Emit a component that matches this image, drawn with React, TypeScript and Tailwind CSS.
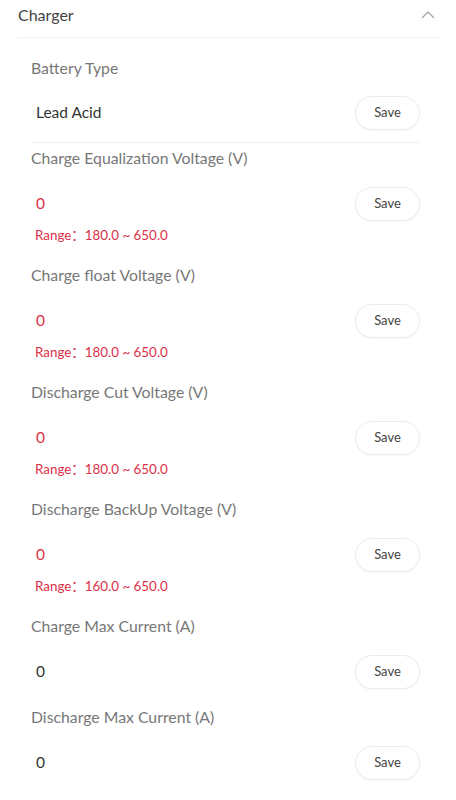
import React from 'react';

type Field = {
  label: string;
  value: string;
  range?: string;
};

const fields: Field[] = [
  { label: 'Charge Equalization Voltage (V)', value: '0', range: '180.0 ~ 650.0' },
  { label: 'Charge float Voltage (V)', value: '0', range: '180.0 ~ 650.0' },
  { label: 'Discharge Cut Voltage (V)', value: '0', range: '180.0 ~ 650.0' },
  { label: 'Discharge BackUp Voltage (V)', value: '0', range: '160.0 ~ 650.0' },
  { label: 'Charge Max Current (A)', value: '0' },
  { label: 'Discharge Max Current (A)', value: '0' },
];

const SaveButton = () => (
  <button className="w-[65px] h-[34px] rounded-full border border-[#ececec] bg-white text-[13px] text-[#444] shadow-[0_1px_2px_rgba(0,0,0,0.04)]">
    Save
  </button>
);

const App = () => {
  return (
    <div
      className="w-[456px] min-h-[800px] bg-white pl-[18px] pr-[16px]"
      style={{ fontFamily: 'Lato, "Noto Sans CJK SC", sans-serif' }}
    >
      {/* header */}
      <div className="h-[38px] flex items-center justify-between pb-[8px] border-b border-[#f3f3f3]">
        <span className="text-[16px] text-[#444]">Charger</span>
        <svg width="14" height="9" viewBox="0 0 14 9" className="mr-[5px]">
          <path d="M1 8 L7 2 L13 8" fill="none" stroke="#aaa" strokeWidth="1.4" />
        </svg>
      </div>

      <div className="pl-[13px] pr-[20px]">
        {/* battery type */}
        <div className="border-b border-[#f0f0f0] pb-[12px] mt-[19px]">
          <div className="text-[15.8px] leading-[22px] text-[#777]">Battery Type</div>
          <div className="mt-[17px] flex items-center justify-between">
            <span className="pl-[5px] text-[15.5px] text-[#333]">Lead Acid</span>
            <SaveButton />
          </div>
        </div>

        <div className="pt-[4px]">
          {fields.map((f) => (
            <div key={f.label} className={f.range ? 'pb-[21px]' : 'pb-[17px]'}>
              <div className="text-[15.8px] leading-[22px] text-[#777]">{f.label}</div>
              <div className="mt-[18px] flex items-center justify-between">
                <span className={`pl-[5px] text-[15.5px] ${f.range ? 'text-[#dc2f47]' : 'text-[#333]'}`}>
                  {f.value}
                </span>
                <SaveButton />
              </div>
              {f.range && (
                <div className="mt-[6px] pl-[4px] text-[13.4px] leading-[16px] text-[#dc2f47]">
                  Range：{f.range}
                </div>
              )}
            </div>
          ))}
        </div>
      </div>
    </div>
  );
};

export default App;
